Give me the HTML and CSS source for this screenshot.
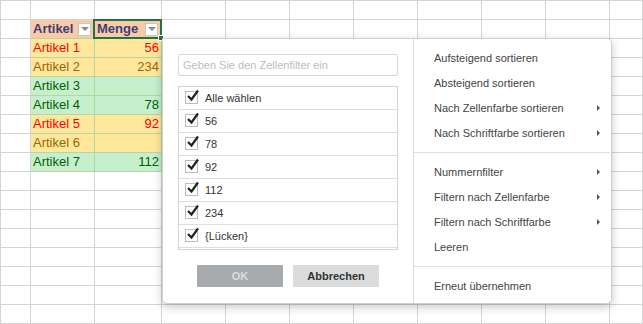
FILE: index.html
```html
<!DOCTYPE html>
<html lang="de">
<head>
    <meta charset="UTF-8">
    <meta name="viewport" content="width=device-width, initial-scale=1.0">
    <title>Tabelle - Filter</title>
    <link rel="stylesheet" href="styles.css">
</head>
<body>
    <div class="sheet">
        <div class="col col-a"></div>

        <div class="col col-b">
            <div class="cell head">Artikel <span class="filter-btn"></span></div>
            <div class="cell bad">Artikel 1</div>
            <div class="cell neutral">Artikel 2</div>
            <div class="cell good">Artikel 3</div>
            <div class="cell good">Artikel 4</div>
            <div class="cell bad">Artikel 5</div>
            <div class="cell neutral">Artikel 6</div>
            <div class="cell good last">Artikel 7</div>
        </div>

        <div class="col col-c">
            <div class="cell head selected">Menge <span class="filter-btn"></span><span class="handle"></span></div>
            <div class="cell num bad">56</div>
            <div class="cell num neutral">234</div>
            <div class="cell num good"></div>
            <div class="cell num good">78</div>
            <div class="cell num bad">92</div>
            <div class="cell num neutral"></div>
            <div class="cell num good last">112</div>
        </div>

        <div class="rest"></div>

        <!-- Filtermenü der Spalte Menge -->
        <div class="filter-menu">
            <div class="filter-left">
                <input type="text" class="search" placeholder="Geben Sie den Zellenfilter ein">

                <ul class="values">
                    <li><svg class="check" viewBox="0 0 15 16"><rect x="0.5" y="2.5" width="12" height="12"/><path d="M3 7 L6.5 10.5 L13 1.5"/></svg>Alle wählen</li>
                    <li><svg class="check" viewBox="0 0 15 16"><rect x="0.5" y="2.5" width="12" height="12"/><path d="M3 7 L6.5 10.5 L13 1.5"/></svg>56</li>
                    <li><svg class="check" viewBox="0 0 15 16"><rect x="0.5" y="2.5" width="12" height="12"/><path d="M3 7 L6.5 10.5 L13 1.5"/></svg>78</li>
                    <li><svg class="check" viewBox="0 0 15 16"><rect x="0.5" y="2.5" width="12" height="12"/><path d="M3 7 L6.5 10.5 L13 1.5"/></svg>92</li>
                    <li><svg class="check" viewBox="0 0 15 16"><rect x="0.5" y="2.5" width="12" height="12"/><path d="M3 7 L6.5 10.5 L13 1.5"/></svg>112</li>
                    <li><svg class="check" viewBox="0 0 15 16"><rect x="0.5" y="2.5" width="12" height="12"/><path d="M3 7 L6.5 10.5 L13 1.5"/></svg>234</li>
                    <li><svg class="check" viewBox="0 0 15 16"><rect x="0.5" y="2.5" width="12" height="12"/><path d="M3 7 L6.5 10.5 L13 1.5"/></svg>{Lücken}</li>
                </ul>

                <div class="buttons">
                    <button class="btn-ok" disabled>OK</button>
                    <button class="btn-cancel">Abbrechen</button>
                </div>
            </div>

            <div class="filter-right">
                <div class="item">Aufsteigend sortieren</div>
                <div class="item">Absteigend sortieren</div>
                <div class="item sub">Nach Zellenfarbe sortieren</div>
                <div class="item sub">Nach Schriftfarbe sortieren</div>
                <div class="separator"></div>
                <div class="item sub">Nummernfilter</div>
                <div class="item sub">Filtern nach Zellenfarbe</div>
                <div class="item sub">Filtern nach Schriftfarbe</div>
                <div class="item">Leeren</div>
                <div class="separator"></div>
                <div class="item">Erneut übernehmen</div>
            </div>
        </div>
    </div>
</body>
</html>
```

FILE: styles.css
```css
body {
    margin: 0;
    font-family: "Liberation Sans", Arial, sans-serif;
    background: white;
}
.sheet {
    position: relative;
    display: flex;
    width: 641px;
    height: 322px;
    border: 1px solid #d4d4d4;
    background-image: linear-gradient(to bottom, transparent 18px, #d4d4d4 18px);
    background-size: 100% 19px;
    overflow: hidden;
}
.col {
    box-sizing: border-box;
    border-right: 1px solid #d4d4d4;
    padding-top: 18px;
}
.col-a {
    width: 30px;
}
.col-b {
    width: 64px;
}
.col-c {
    width: 67px;
}
.rest {
    flex: 1;
    background-image: linear-gradient(to right, transparent 63px, #d4d4d4 63px);
    background-size: 64px 100%;
}

/* Tabelle */
.cell {
    box-sizing: border-box;
    height: 19px;
    line-height: 18px;
    padding: 0 2px;
    font-size: 13px;
    border-top: 1px solid #b2d8a0;
    border-right: 1px solid #b2d8a0;
    margin-right: -1px;
    white-space: nowrap;
}
.cell.last {
    height: 20px;
    border-bottom: 1px solid #b2d8a0;
}
.num {
    text-align: right;
}
.head {
    display: flex;
    justify-content: space-between;
    align-items: center;
    padding: 0 3px 0 2px;
    background: #f8cba6;
    color: #3f3f76;
    font-weight: bold;
    border-top-color: #d4d4d4;
    border-right-color: #d4d4d4;
}
.filter-btn {
    display: flex;
    justify-content: center;
    align-items: center;
    width: 13px;
    height: 13px;
    box-sizing: border-box;
    border: 1px solid #c8c8c8;
    background: white;
}
.filter-btn::after {
    content: "";
    border-left: 4px solid transparent;
    border-right: 4px solid transparent;
    border-top: 4px solid #8a8a8a;
}
.selected {
    position: relative;
}
.selected::before {
    content: "";
    position: absolute;
    top: -1px;
    left: -2px;
    right: -1px;
    bottom: -1px;
    border: 2px solid #217346;
}
.handle {
    position: absolute;
    right: -3px;
    bottom: -3px;
    width: 4px;
    height: 4px;
    background: #217346;
    border: 1px solid white;
}
.bad {
    background: #ffe89c;
    color: #ff0000;
}
.neutral {
    background: #ffe89c;
    color: #9c6500;
}
.good {
    background: #c6efce;
    color: #006100;
}

/* Filtermenü */
.filter-menu {
    position: absolute;
    left: 161px;
    top: 37px;
    width: 450px;
    box-sizing: border-box;
    display: flex;
    background: white;
    border: 1px solid #d0d0d0;
    border-radius: 0 5px 5px 5px;
    box-shadow: 0 3px 10px rgba(0, 0, 0, 0.22);
    font-size: 11px;
    color: #333;
}
.filter-left {
    width: 251px;
    box-sizing: border-box;
    padding: 15px 15px 16px;
    border-right: 1px solid #dcdcdc;
}
.search {
    display: block;
    width: 100%;
    height: 22px;
    box-sizing: border-box;
    margin: 0;
    padding: 0 4px;
    border: 1px solid #d8d8d8;
    border-radius: 2px;
    font-family: inherit;
    font-size: 11px;
}
.search::placeholder {
    color: #bdbdbd;
}
.values {
    list-style: none;
    margin: 10px 0 0;
    padding: 0 0 1px;
    border: 1px solid #d2d2d2;
}
.values li {
    display: flex;
    align-items: center;
    height: 23px;
    box-sizing: border-box;
    padding-left: 6px;
    border-bottom: 1px solid #dedede;
}
.check {
    width: 15px;
    height: 16px;
    margin: -3px 5px 0 0;
}
.check rect {
    fill: white;
    stroke: #bcbcbc;
}
.check path {
    fill: none;
    stroke: #222;
    stroke-width: 2.2;
}
.buttons {
    display: flex;
    justify-content: center;
    gap: 10px;
    margin-top: 15px;
}
.buttons button {
    width: 86px;
    height: 22px;
    border: none;
    border-radius: 1px;
    font-family: inherit;
    font-size: 11px;
    font-weight: bold;
    padding: 0;
}
.btn-ok {
    background: #a7abae;
    color: #d9dcde;
}
.btn-cancel {
    background: #dadbdc;
    color: #333;
}
.filter-right {
    flex: 1;
    padding-top: 6px;
    color: #444;
}
.item {
    display: flex;
    justify-content: space-between;
    align-items: center;
    height: 25px;
    padding: 0 11px 0 20px;
}
.item.sub::after {
    content: "";
    border-left: 3px solid #555;
    border-top: 3px solid transparent;
    border-bottom: 3px solid transparent;
}
.separator {
    height: 1px;
    margin: 7px 1px 6px 0;
    background: #e0e0e0;
}
```
